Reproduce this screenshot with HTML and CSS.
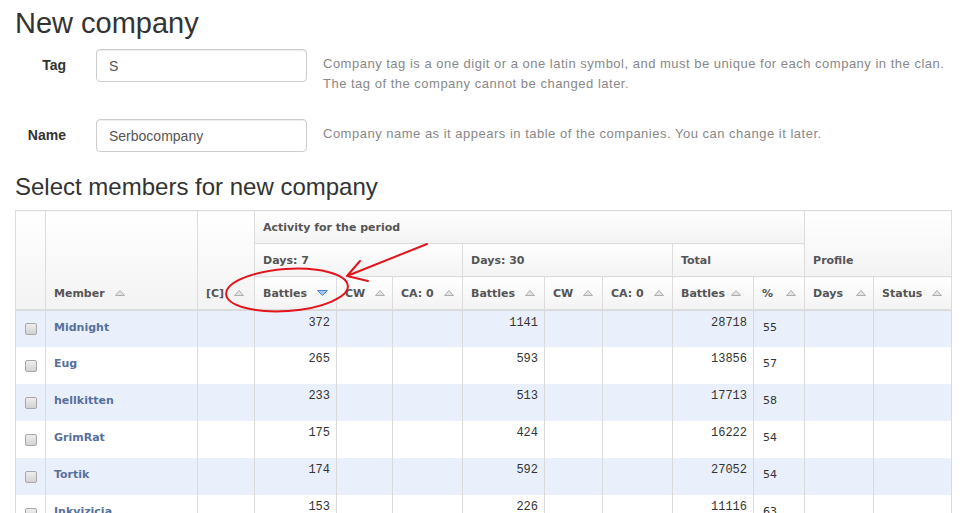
FILE: index.html
```html
<!DOCTYPE html>
<html lang="en">
<head>
<meta charset="utf-8">
<title>New company</title>
<link rel="stylesheet" href="styles.css">
</head>
<body>
<div class="page">
  <h1 class="title">New company</h1>

  <form class="company-form">
    <div class="form-row">
      <label class="label" for="tag">Tag</label>
      <input class="input" id="tag" type="text" value="S">
      <p class="help">Company tag is a one digit or a one latin symbol, and must be unique for each company in the clan.<br>The tag of the company cannot be changed later.</p>
    </div>
    <div class="form-row">
      <label class="label" for="name">Name</label>
      <input class="input" id="name" type="text" value="Serbocompany">
      <p class="help">Company name as it appears in table of the companies. You can change it later.</p>
    </div>
  </form>

  <h2 class="section-title">Select members for new company</h2>

  <table class="members">
    <colgroup>
      <col class="w-cb"><col class="w-member"><col class="w-c">
      <col class="w-b7"><col class="w-cw7"><col class="w-ca7">
      <col class="w-b30"><col class="w-cw30"><col class="w-ca30">
      <col class="w-bt"><col class="w-pct">
      <col class="w-days"><col class="w-status">
    </colgroup>
    <thead>
      <tr>
        <th class="tall" rowspan="3"></th>
        <th class="tall" rowspan="3">Member<span class="sort"><svg width="10" height="6" viewBox="0 0 10 6"><polygon points="0.5,5.5 5,0.5 9.5,5.5" class="tri"/></svg></span></th>
        <th class="tall" rowspan="3">[C]<span class="sort"><svg width="10" height="6" viewBox="0 0 10 6"><polygon points="0.5,5.5 5,0.5 9.5,5.5" class="tri"/></svg></span></th>
        <th colspan="8">Activity for the period</th>
        <th class="tall" colspan="2" rowspan="2">Profile</th>
      </tr>
      <tr>
        <th colspan="3">Days: 7</th>
        <th colspan="3">Days: 30</th>
        <th colspan="2">Total</th>
      </tr>
      <tr>
        <th>Battles<span class="sort"><svg width="11" height="6" viewBox="0 0 11 6"><polygon points="0.5,0.5 10.5,0.5 5.5,5.5" class="tri active"/></svg></span></th>
        <th>CW<span class="sort"><svg width="10" height="6" viewBox="0 0 10 6"><polygon points="0.5,5.5 5,0.5 9.5,5.5" class="tri"/></svg></span></th>
        <th>CA: 0<span class="sort"><svg width="10" height="6" viewBox="0 0 10 6"><polygon points="0.5,5.5 5,0.5 9.5,5.5" class="tri"/></svg></span></th>
        <th>Battles<span class="sort"><svg width="10" height="6" viewBox="0 0 10 6"><polygon points="0.5,5.5 5,0.5 9.5,5.5" class="tri"/></svg></span></th>
        <th>CW<span class="sort"><svg width="10" height="6" viewBox="0 0 10 6"><polygon points="0.5,5.5 5,0.5 9.5,5.5" class="tri"/></svg></span></th>
        <th>CA: 0<span class="sort"><svg width="10" height="6" viewBox="0 0 10 6"><polygon points="0.5,5.5 5,0.5 9.5,5.5" class="tri"/></svg></span></th>
        <th>Battles<span class="sort narrow"><svg width="10" height="6" viewBox="0 0 10 6"><polygon points="0.5,5.5 5,0.5 9.5,5.5" class="tri"/></svg></span></th>
        <th>%<span class="sort wide"><svg width="10" height="6" viewBox="0 0 10 6"><polygon points="0.5,5.5 5,0.5 9.5,5.5" class="tri"/></svg></span></th>
        <th>Days<span class="sort wide"><svg width="10" height="6" viewBox="0 0 10 6"><polygon points="0.5,5.5 5,0.5 9.5,5.5" class="tri"/></svg></span></th>
        <th>Status<span class="sort"><svg width="10" height="6" viewBox="0 0 10 6"><polygon points="0.5,5.5 5,0.5 9.5,5.5" class="tri"/></svg></span></th>
      </tr>
    </thead>
    <tbody>
      <tr>
        <td class="cb"><input class="check" type="checkbox"></td>
        <td class="name">Midnight</td><td></td>
        <td class="num">372</td><td></td><td></td>
        <td class="num">1141</td><td></td><td></td>
        <td class="num">28718</td><td class="pct">55</td><td></td><td></td>
      </tr>
      <tr>
        <td class="cb"><input class="check" type="checkbox"></td>
        <td class="name">Eug</td><td></td>
        <td class="num">265</td><td></td><td></td>
        <td class="num">593</td><td></td><td></td>
        <td class="num">13856</td><td class="pct">57</td><td></td><td></td>
      </tr>
      <tr>
        <td class="cb"><input class="check" type="checkbox"></td>
        <td class="name">hellkitten</td><td></td>
        <td class="num">233</td><td></td><td></td>
        <td class="num">513</td><td></td><td></td>
        <td class="num">17713</td><td class="pct">58</td><td></td><td></td>
      </tr>
      <tr>
        <td class="cb"><input class="check" type="checkbox"></td>
        <td class="name">GrimRat</td><td></td>
        <td class="num">175</td><td></td><td></td>
        <td class="num">424</td><td></td><td></td>
        <td class="num">16222</td><td class="pct">54</td><td></td><td></td>
      </tr>
      <tr>
        <td class="cb"><input class="check" type="checkbox"></td>
        <td class="name">Tortik</td><td></td>
        <td class="num">174</td><td></td><td></td>
        <td class="num">592</td><td></td><td></td>
        <td class="num">27052</td><td class="pct">54</td><td></td><td></td>
      </tr>
      <tr>
        <td class="cb"><input class="check" type="checkbox"></td>
        <td class="name">Inkvizicia</td><td></td>
        <td class="num">153</td><td></td><td></td>
        <td class="num">226</td><td></td><td></td>
        <td class="num">11116</td><td class="pct">63</td><td></td><td></td>
      </tr>
    </tbody>
  </table>

  <svg class="annotation" width="965" height="513" viewBox="0 0 965 513">
    <ellipse cx="287" cy="290" rx="61" ry="21" transform="rotate(-4 287 290)"/>
    <path d="M427 244 L347 276 M360 261 L347 276 L368 281"/>
  </svg>
</div>
</body>
</html>
```

FILE: styles.css
```css
* { box-sizing: border-box; }

html, body { overflow: hidden; }

body {
  margin: 0;
  background: #fff;
  color: #333;
  font-family: "Liberation Sans", Arial, sans-serif;
}

.page {
  position: relative;
  padding: 5px 14px 0 15px;
}

.title {
  margin: 0;
  font-size: 29px;
  font-weight: normal;
  line-height: 36px;
  color: #333;
}

.company-form { margin-top: 8px; }

.form-row {
  display: flex;
  align-items: flex-start;
}

.form-row + .form-row { margin-top: 25px; }

.label {
  width: 51px;
  flex: none;
  text-align: right;
  font-size: 14px;
  font-weight: bold;
  line-height: 33px;
  color: #333;
}

.input {
  flex: none;
  margin: 0 0 0 30px;
  width: 211px;
  height: 33px;
  padding: 0 12px;
  border: 1px solid #ccc;
  border-radius: 4px;
  box-shadow: inset 0 1px 1px rgba(0, 0, 0, 0.075);
  font-family: "Liberation Sans", Arial, sans-serif;
  font-size: 14px;
  color: #555;
}

.help {
  margin: 5px 0 0 16px;
  font-size: 13px;
  letter-spacing: 0.5px;
  line-height: 20px;
  color: #888;
  white-space: nowrap;
}

.section-title {
  margin: 21px 0 10px;
  font-size: 24px;
  font-weight: normal;
  line-height: 27px;
  color: #333;
}

.members {
  border-collapse: collapse;
  table-layout: fixed;
  width: 936px;
}

.w-cb { width: 30px; }
.w-member { width: 152px; }
.w-c { width: 57px; }
.w-b7 { width: 82px; }
.w-cw7 { width: 56px; }
.w-ca7 { width: 70px; }
.w-b30 { width: 82px; }
.w-cw30 { width: 58px; }
.w-ca30 { width: 70px; }
.w-bt { width: 81px; }
.w-pct { width: 51px; }
.w-days { width: 69px; }
.w-status { width: 78px; }

.members th {
  height: 33px;
  padding: 1px 0 0 8px;
  border: 1px solid #dcdcdc;
  background: linear-gradient(#ffffff, #f3f3f3);
  font-family: "DejaVu Sans", Verdana, sans-serif;
  font-size: 11px;
  font-weight: bold;
  line-height: 31px;
  color: #555;
  text-align: left;
  white-space: nowrap;
  vertical-align: middle;
}

.members th.tall { vertical-align: bottom; }

.sort {
  display: inline-block;
  margin-left: 10px;
  line-height: 0;
  vertical-align: 1px;
}

.sort.narrow { margin-left: 6px; }
.sort.wide { margin-left: 13px; }

.tri {
  fill: #e3e3e3;
  stroke: #adadad;
  stroke-width: 1;
}

.tri.active {
  fill: #a8c8f2;
  stroke: #4f86d0;
}

.members td {
  height: 37px;
  padding: 0 8px;
  border-left: 1px solid #dadada;
  border-right: 1px solid #dadada;
  background: #fff;
  vertical-align: middle;
}

.members tbody tr:first-child td { border-top: 2px solid #dadada; }

.members tbody tr:nth-child(odd) td { background: #eaf0fb; }

.members td.cb { padding: 0; }

.check {
  display: block;
  margin: 0 auto;
  width: 12px;
  height: 12px;
  appearance: none;
  -webkit-appearance: none;
  border: 1px solid #a8a8a8;
  border-radius: 2px;
  background: linear-gradient(#eeeeee, #d2d2d2);
}

.members td.name,
.members td.pct {
  padding-top: 10px;
  vertical-align: top;
  font-family: "DejaVu Sans", Verdana, sans-serif;
  font-size: 11px;
  line-height: 13px;
}

.members td.name {
  padding-left: 8px;
  font-weight: bold;
  color: #56709e;
}

.members td.pct {
  padding-left: 9px;
  color: #333;
}

.members td.num {
  padding: 5px 6px 0 0;
  text-align: right;
  vertical-align: top;
  font-family: "Liberation Mono", "Courier New", monospace;
  font-size: 12px;
  line-height: 14px;
  color: #333;
}

.annotation {
  position: absolute;
  left: 0;
  top: 0;
  pointer-events: none;
  fill: none;
  stroke: #e2141c;
  stroke-width: 2;
  stroke-linecap: round;
  stroke-linejoin: round;
}
```
